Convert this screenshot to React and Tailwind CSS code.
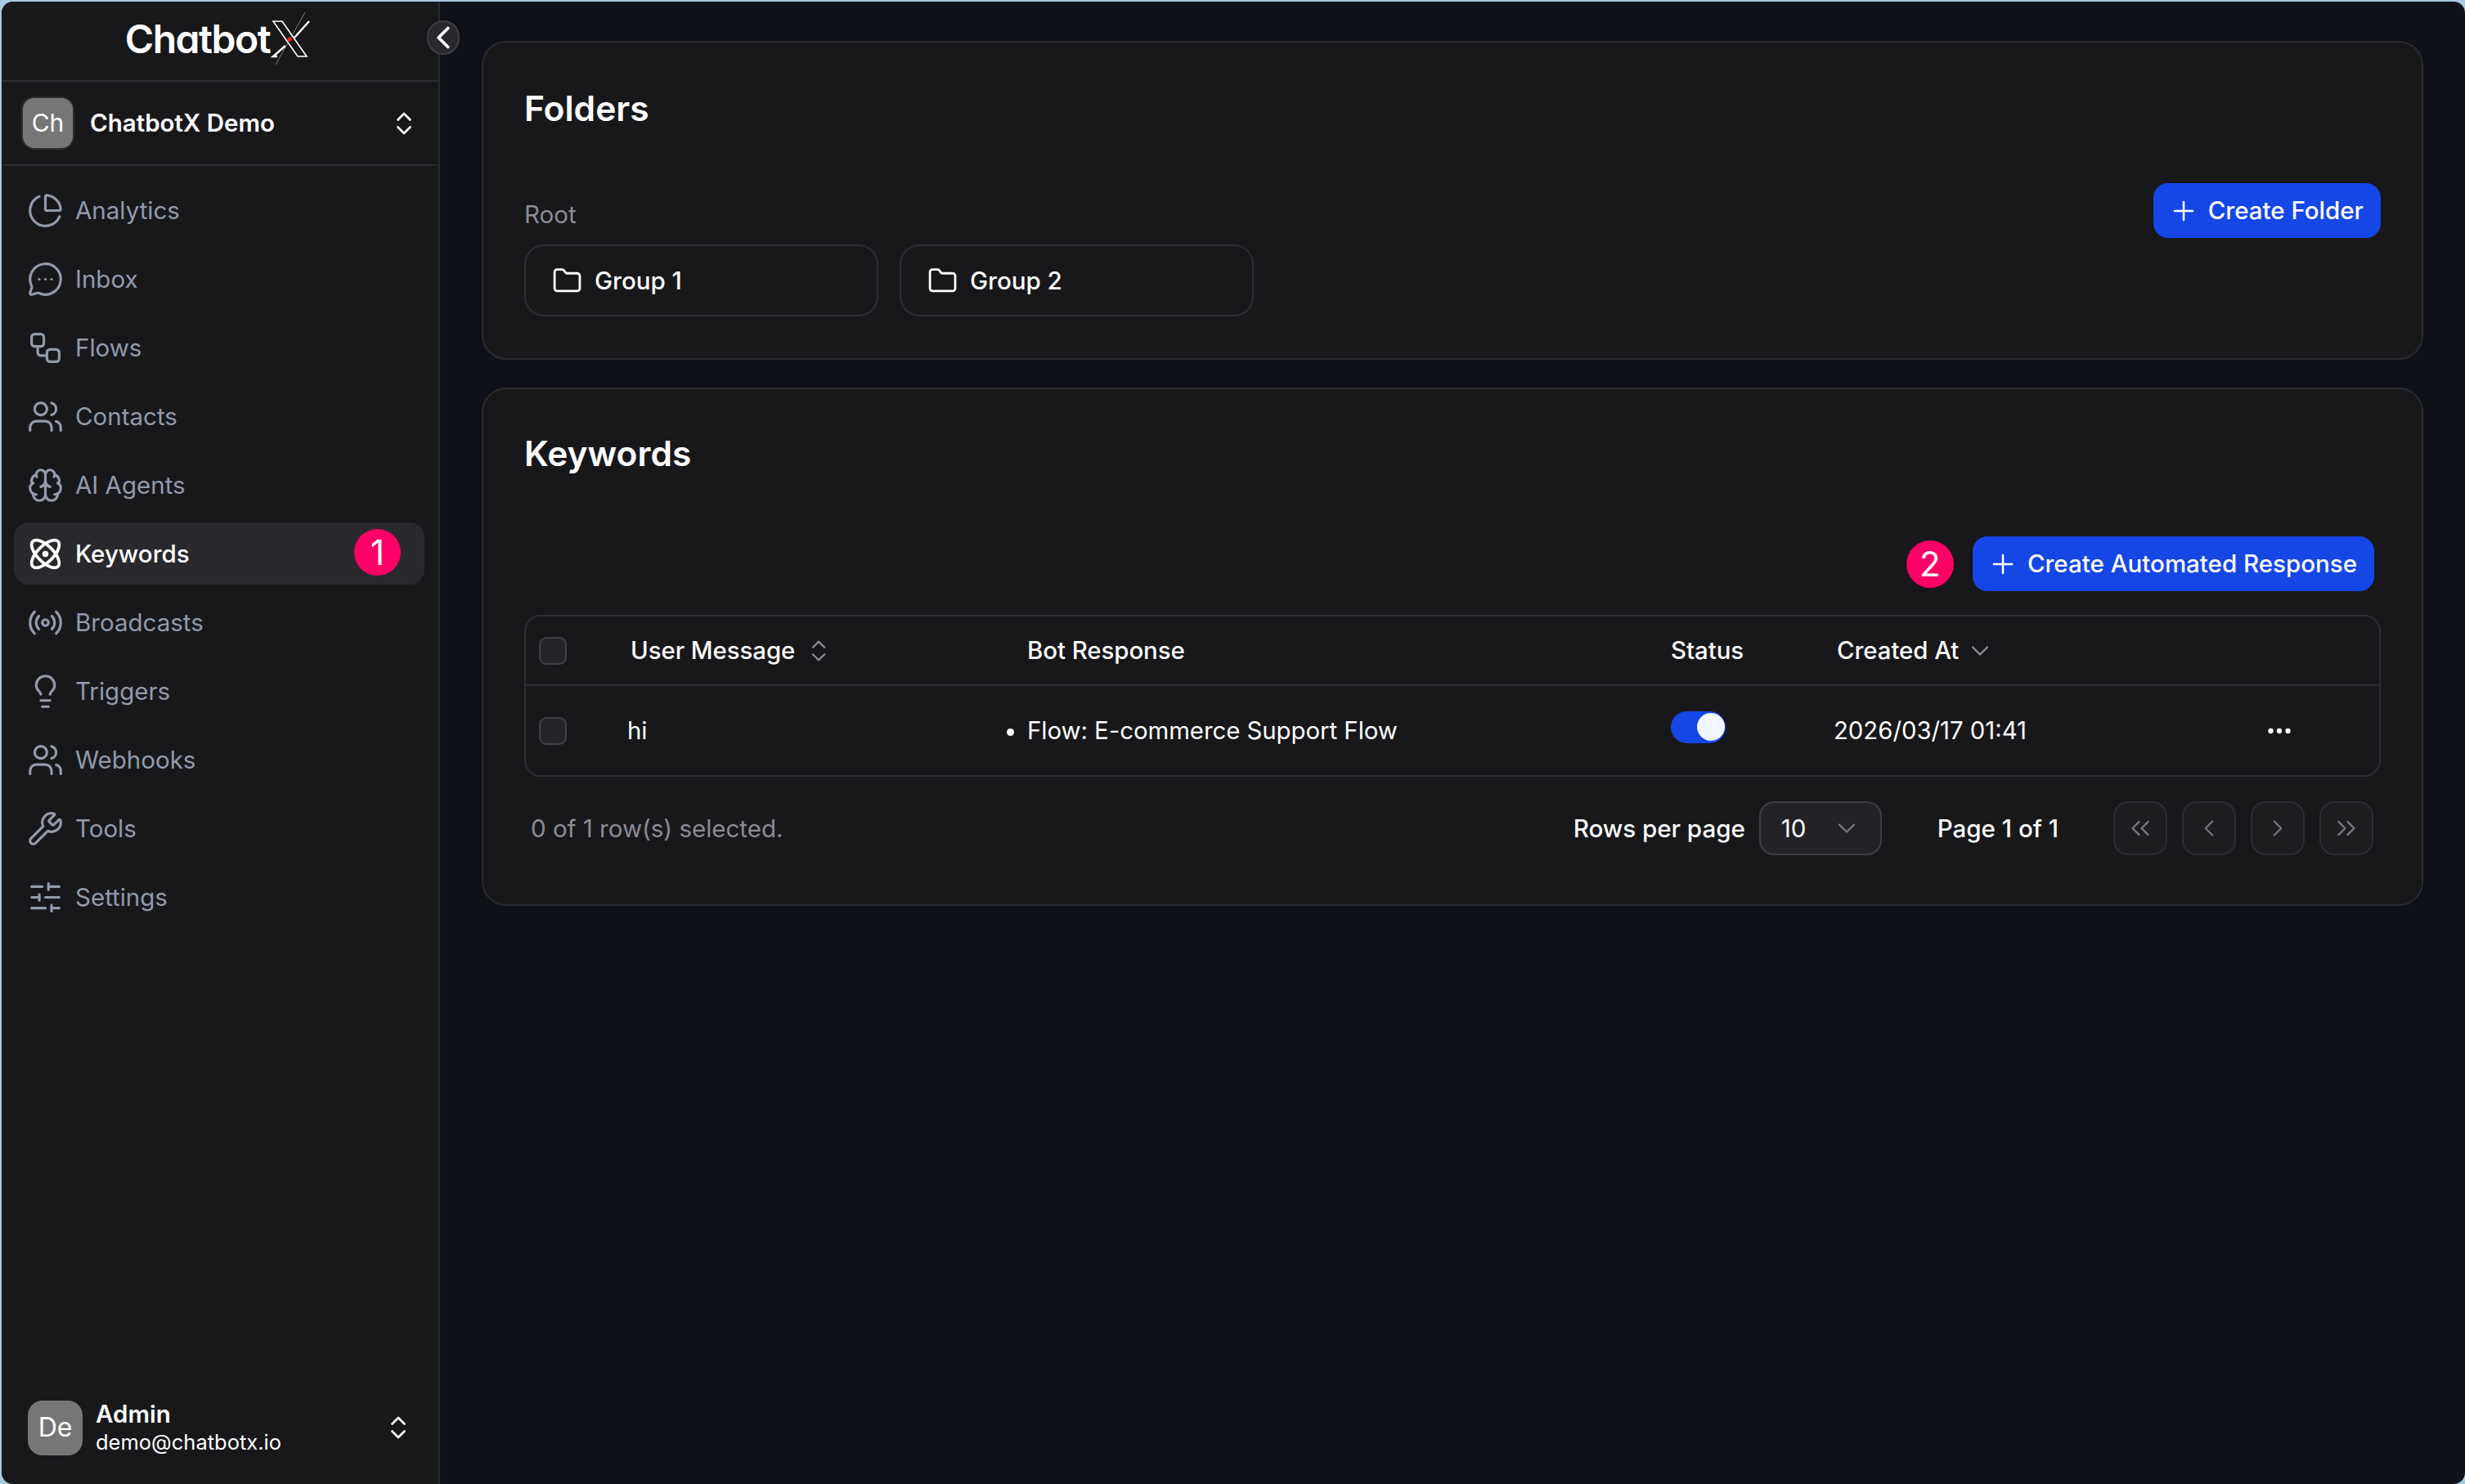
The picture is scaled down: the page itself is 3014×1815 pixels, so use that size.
import {
  Atom,
  Brain,
  ChartPie,
  ChevronDown,
  ChevronLeft,
  ChevronRight,
  ChevronsLeft,
  ChevronsRight,
  ChevronsUpDown,
  Ellipsis,
  Folder,
  Lightbulb,
  MessageCircleMore,
  Plus,
  Radio,
  SlidersHorizontal,
  Users,
  Workflow,
  Wrench,
} from "lucide-react";

const navItems = [
  { label: "Analytics", icon: ChartPie },
  { label: "Inbox", icon: MessageCircleMore },
  { label: "Flows", icon: Workflow },
  { label: "Contacts", icon: Users },
  { label: "AI Agents", icon: Brain },
  { label: "Keywords", icon: Atom, active: true },
  { label: "Broadcasts", icon: Radio },
  { label: "Triggers", icon: Lightbulb },
  { label: "Webhooks", icon: Users },
  { label: "Tools", icon: Wrench },
  { label: "Settings", icon: SlidersHorizontal },
];

function Logo() {
  return (
    <div className="flex items-center">
      <span className="text-[48px] leading-none font-semibold tracking-[-1.5px] text-white [font-feature-settings:'cv11']">
        Chatbot
      </span>
      <svg width="50" height="66" viewBox="0 0 50 66" fill="none" className="ml-[1px] -mt-[2px]">
        <path d="M3 12h11l30 43h-11z" stroke="#fff" strokeWidth="1.6" />
        <path d="M47 12 29 32M18 42 3 55h5" stroke="#fff" strokeWidth="2.4" />
        <path d="M42 1 6 65" stroke="#9a9a9a" strokeWidth="0.8" />
        <circle cx="23" cy="34" r="2.6" fill="#ff1a1a" />
      </svg>
    </div>
  );
}

function Sidebar() {
  return (
    <aside className="relative flex h-full w-[536px] shrink-0 flex-col rounded-l-[14px] border-r-2 border-[#272a33] bg-[#18181b]">
      <div className="flex h-[98px] items-center justify-center border-b-2 border-[#2b2b30] pb-[4px] pr-[4px]">
        <Logo />
      </div>
      <button className="absolute left-[520px] top-[23px] flex h-[42px] w-[40px] items-center justify-center rounded-full border-2 border-[#3d3d42] bg-[#29292d] text-white">
        <ChevronLeft size={46} className="shrink-0" />
      </button>

      <div className="flex h-[103px] items-center border-b-2 border-[#2b2b30] pl-[24px] pr-[24px]">
        <div className="flex h-[65px] w-[65px] items-center justify-center rounded-[16px] border-2 border-[#2f2f33] bg-[#767676] text-[30px] text-white">
          Ch
        </div>
        <span className="ml-[19px] text-[29.5px] font-semibold text-white">ChatbotX Demo</span>
        <ChevronsUpDown size={36} strokeWidth={1.8} className="ml-auto text-white" />
      </div>

      <nav className="flex flex-col gap-[8px] pl-[15px] pr-[17px] pt-[16px]">
        {navItems.map((item) => (
          <a
            key={item.label}
            className={
              item.active
                ? "flex h-[76px] items-center gap-[14px] rounded-[18px] bg-[#29292d] pl-[16px] pr-[29px] text-[29.5px] font-medium text-white"
                : "flex h-[76px] items-center gap-[14px] rounded-[18px] pl-[16px] pr-[29px] text-[29.5px] text-[#929aab]"
            }
          >
            <item.icon size={45} strokeWidth={item.active ? 2 : 1.7} />
            {item.label}
            {item.active && (
              <span className="mb-[3px] ml-auto flex h-[57px] w-[57px] items-center justify-center rounded-full bg-[#ff0066] text-[42px] font-normal text-white">
                1
              </span>
            )}
          </a>
        ))}
      </nav>

      <div className="mt-auto flex items-center pb-[34px] pl-[32px] pr-[31px]">
        <div className="flex h-[67px] w-[67px] items-center justify-center rounded-[18px] bg-[#767676] text-[32px] text-white">
          De
        </div>
        <div className="ml-[16px] flex flex-col text-white">
          <span className="text-[29.5px] leading-[36px] font-semibold">Admin</span>
          <span className="text-[25.5px] leading-[34px]">demo@chatbotx.io</span>
        </div>
        <ChevronsUpDown size={36} strokeWidth={1.8} className="ml-auto text-white" />
      </div>
    </aside>
  );
}

function PrimaryButton({ children }) {
  return (
    <button className="flex h-[67px] items-center gap-[11px] rounded-[18px] bg-[#1447e6] pl-[18px] pr-[21px] text-[29.5px] font-medium text-white">
      <Plus size={38} strokeWidth={1.6} />
      {children}
    </button>
  );
}

function Checkbox() {
  return <span className="block h-[34px] w-[34px] rounded-[9px] border-2 border-[#3f3f44] bg-[#252529]" />;
}

function PageButton({ icon: Icon, size }) {
  return (
    <button className="flex h-[66px] w-[66px] items-center justify-center rounded-[18px] border-2 border-[#2d2d31] bg-[#1e1e21] text-[#77777d]">
      <Icon size={size} strokeWidth={1.5} />
    </button>
  );
}

function FolderCard({ name }) {
  return (
    <div className="flex h-[88px] w-[433px] items-center gap-[15px] rounded-[24px] border-2 border-[#2d2d31] pl-[32px] text-[29.5px] font-medium text-white">
      <Folder size={37} strokeWidth={1.8} />
      {name}
    </div>
  );
}

export default function App() {
  return (
    <div className="h-screen w-screen overflow-hidden bg-[#a9cbe0] pl-[2px] pt-[2px] font-['Inter',sans-serif]">
      <div className="flex h-full overflow-hidden rounded-[14px] bg-[#0f1119]">
        <Sidebar />

        <main className="flex-1 pl-[51px] pr-[51px] pt-[48px]">
          <section className="h-[390px] rounded-[30px] border-2 border-[#2b2b2f] bg-[#18181b] px-[50px] pt-[55px]">
            <h2 className="text-[42.5px] leading-[52px] font-semibold text-white">Folders</h2>
            <div className="mt-[65px] flex items-start justify-between">
              <div>
                <div className="mt-[18px] text-[29.5px] leading-[40px] text-[#8b8b95]">Root</div>
                <div className="mt-[17px] flex gap-[26px]">
                  <FolderCard name="Group 1" />
                  <FolderCard name="Group 2" />
                </div>
              </div>
              <PrimaryButton>Create Folder</PrimaryButton>
            </div>
          </section>

          <section className="mt-[34px] h-[634px] rounded-[30px] border-2 border-[#2b2b2f] bg-[#18181b] px-[50px] pt-[53px]">
            <h2 className="text-[42.5px] leading-[52px] font-semibold text-white">Keywords</h2>

            <div className="mt-[75px] flex items-center justify-end gap-[23px] pr-[8px]">
              <span className="flex h-[58px] w-[58px] items-center justify-center rounded-full bg-[#ff0066] text-[42px] text-white">
                2
              </span>
              <PrimaryButton>Create Automated Response</PrimaryButton>
            </div>

            <div className="mt-[29px] rounded-[20px] border-2 border-[#2d2d31] text-[29.3px] text-white">
              <div className="grid h-[85px] grid-cols-[128px_485px_787px_203px_523px_1fr] items-center border-b-2 border-[#2d2d31] font-medium">
                <div className="pl-[16px]">
                  <Checkbox />
                </div>
                <div className="flex items-center gap-[12px]">
                  User Message
                  <ChevronsUpDown size={34} strokeWidth={1.6} className="text-[#8b8b95]" />
                </div>
                <div>Bot Response</div>
                <div>Status</div>
                <div className="flex items-center gap-[8px]">
                  Created At
                  <ChevronDown size={36} strokeWidth={1.6} className="text-[#8b8b95]" />
                </div>
              </div>
              <div className="grid h-[109px] grid-cols-[128px_485px_787px_203px_523px_1fr] items-center">
                <div className="pl-[16px]">
                  <Checkbox />
                </div>
                <div className="-ml-[4px]">hi</div>
                <ul className="list-disc">
                  <li>Flow: E-commerce Support Flow</li>
                </ul>
                <div className="-mt-[9px]">
                  <span className="flex h-[39px] w-[67px] items-center justify-end rounded-full bg-[#1447e6] pr-[1px]">
                    <span className="block h-[34px] w-[34px] rounded-full bg-[#eff6ff]" />
                  </span>
                </div>
                <div className="-ml-[4px] whitespace-nowrap">2026/03/17 01:41</div>
                <div>
                  <Ellipsis size={36} strokeWidth={2.2} />
                </div>
              </div>
            </div>

            <div className="mt-[30px] flex items-center pl-[8px] pr-[9px] text-[29.5px]">
              <span className="text-[#8b8b95]">0 of 1 row(s) selected.</span>
              <span className="ml-auto font-medium text-white">Rows per page</span>
              <div className="ml-[17px] flex h-[66px] w-[150px] items-center justify-between rounded-[18px] border-2 border-[#3c3c42] bg-[#232327] pl-[25px] pr-[23px] text-white">
                10
                <ChevronDown size={36} strokeWidth={1.5} className="text-[#77777d]" />
              </div>
              <span className="ml-[68px] font-medium text-white">Page 1 of 1</span>
              <div className="ml-[67px] flex gap-[18px]">
                <PageButton icon={ChevronsLeft} size={38} />
                <PageButton icon={ChevronLeft} size={34} />
                <PageButton icon={ChevronRight} size={34} />
                <PageButton icon={ChevronsRight} size={38} />
              </div>
            </div>
          </section>
        </main>
      </div>
    </div>
  );
}
